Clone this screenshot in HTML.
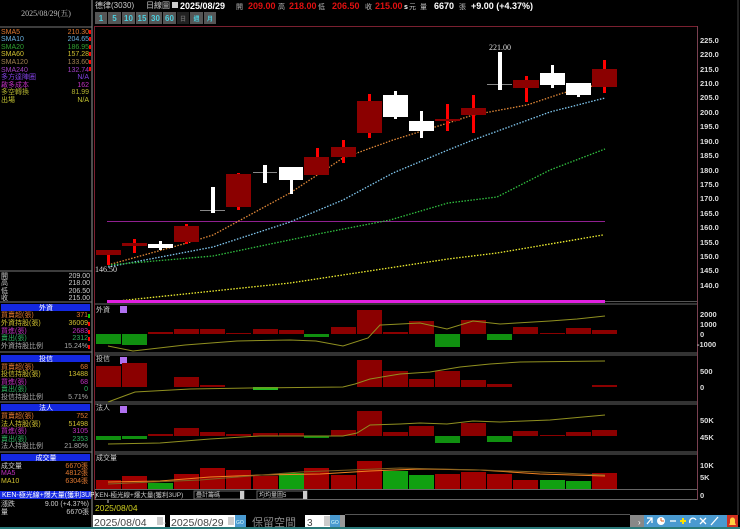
<!DOCTYPE html>
<html><head><meta charset="utf-8"><style>
html,body{margin:0;padding:0;background:#000;width:740px;height:529px;overflow:hidden}
svg{display:block}
text{font-family:"Liberation Sans","Noto Sans CJK TC",sans-serif}
.s{font-family:"Liberation Serif","Noto Serif CJK SC",serif}
</style></head><body>
<svg width="740" height="529" viewBox="0 0 740 529" xmlns="http://www.w3.org/2000/svg">
<rect width="740" height="529" fill="#000"/>
<!-- left panel -->
<line x1="92" y1="0" x2="92" y2="529" stroke="#666" stroke-width="1.5"/>
<text x="46" y="16" fill="#bbb" font-size="8" text-anchor="middle" class="s">2025/08/29(五)</text>
<line x1="0" y1="27" x2="92" y2="27" stroke="#777"/>
<g font-size="7" class="s">
<text x="1" y="34" fill="#e07830">SMA5</text><text x="89" y="34" fill="#e07830" text-anchor="end">210.30</text>
<text x="1" y="41" fill="#6ab0e0">SMA10</text><text x="89" y="41" fill="#6ab0e0" text-anchor="end">204.65</text>
<text x="1" y="49" fill="#30a030">SMA20</text><text x="89" y="49" fill="#30a030" text-anchor="end">186.95</text>
<text x="1" y="56" fill="#d0c030">SMA60</text><text x="89" y="56" fill="#d0c030" text-anchor="end">157.28</text>
<text x="1" y="64" fill="#a08050">SMA120</text><text x="89" y="64" fill="#a08050" text-anchor="end">133.60</text>
<text x="1" y="72" fill="#a040c0">SMA240</text><text x="89" y="72" fill="#a040c0" text-anchor="end">132.74</text>
<text x="1" y="79" fill="#8040e0">多方達陣圈</text><text x="89" y="79" fill="#8040e0" text-anchor="end">N/A</text>
<text x="1" y="87" fill="#c030c0">啟多成本</text><text x="89" y="87" fill="#c030c0" text-anchor="end">162</text>
<text x="1" y="94" fill="#b0b030">多空轉換</text><text x="89" y="94" fill="#b0b030" text-anchor="end">81.99</text>
<text x="1" y="102" fill="#c0c030">出場</text><text x="89" y="102" fill="#c0c030" text-anchor="end">N/A</text>
</g>
<g fill="#f00"><rect x="89" y="30" width="2" height="4"/><rect x="89" y="37" width="2" height="4"/><rect x="89" y="45" width="2" height="4"/><rect x="89" y="52" width="2" height="4"/><rect x="89" y="60" width="2" height="4"/><rect x="89" y="67" width="2" height="4"/></g>
<line x1="0" y1="271" x2="92" y2="271" stroke="#777"/>
<g font-size="7" class="s" fill="#ccc">
<text x="1" y="278">開</text><text x="90" y="278" text-anchor="end">209.00</text>
<text x="1" y="285">高</text><text x="90" y="285" text-anchor="end">218.00</text>
<text x="1" y="293">低</text><text x="90" y="293" text-anchor="end">206.50</text>
<text x="1" y="300">收</text><text x="90" y="300" text-anchor="end">215.00</text>
</g>
<line x1="0" y1="302" x2="92" y2="302" stroke="#777"/>
<g font-size="7" class="s">
<rect x="1" y="304" width="89" height="7" fill="#1428e0"/><text x="46" y="310" fill="#fff" text-anchor="middle">外資</text>
<text x="1" y="317" fill="#e07830">買賣超(張)</text><text x="88" y="317" fill="#e07830" text-anchor="end">371</text>
<text x="1" y="325" fill="#d0c030">外資持股(張)</text><text x="88" y="325" fill="#d0c030" text-anchor="end">36009</text>
<text x="1" y="333" fill="#c030c0">買進(張)</text><text x="88" y="333" fill="#c030c0" text-anchor="end">2683</text>
<text x="1" y="340" fill="#30b060">賣出(張)</text><text x="88" y="340" fill="#30b060" text-anchor="end">2312</text>
<text x="1" y="348" fill="#aaa">外資持股比例</text><text x="88" y="348" fill="#aaa" text-anchor="end">15.24%</text>
<line x1="0" y1="352" x2="92" y2="352" stroke="#777"/>
<rect x="1" y="355" width="89" height="7" fill="#1428e0"/><text x="46" y="361" fill="#fff" text-anchor="middle">投信</text>
<text x="1" y="369" fill="#e07830">買賣超(張)</text><text x="88" y="369" fill="#e07830" text-anchor="end">68</text>
<text x="1" y="376" fill="#d0c030">投信持股(張)</text><text x="88" y="376" fill="#d0c030" text-anchor="end">13488</text>
<text x="1" y="384" fill="#c030c0">買進(張)</text><text x="88" y="384" fill="#c030c0" text-anchor="end">68</text>
<text x="1" y="391" fill="#30b060">賣出(張)</text><text x="88" y="391" fill="#30b060" text-anchor="end">0</text>
<text x="1" y="399" fill="#aaa">投信持股比例</text><text x="88" y="399" fill="#aaa" text-anchor="end">5.71%</text>
<line x1="0" y1="402" x2="92" y2="402" stroke="#777"/>
<rect x="1" y="404" width="89" height="7" fill="#1428e0"/><text x="46" y="410" fill="#fff" text-anchor="middle">法人</text>
<text x="1" y="418" fill="#e07830">買賣超(張)</text><text x="88" y="418" fill="#e07830" text-anchor="end">752</text>
<text x="1" y="426" fill="#d0c030">法人持股(張)</text><text x="88" y="426" fill="#d0c030" text-anchor="end">51498</text>
<text x="1" y="433" fill="#c030c0">買進(張)</text><text x="88" y="433" fill="#c030c0" text-anchor="end">3105</text>
<text x="1" y="441" fill="#30b060">賣出(張)</text><text x="88" y="441" fill="#30b060" text-anchor="end">2353</text>
<text x="1" y="448" fill="#aaa">法人持股比例</text><text x="88" y="448" fill="#aaa" text-anchor="end">21.80%</text>
<line x1="0" y1="452" x2="92" y2="452" stroke="#777"/>
<rect x="1" y="454" width="89" height="7" fill="#1428e0"/><text x="46" y="460" fill="#fff" text-anchor="middle">成交量</text>
<text x="1" y="468" fill="#ccc">成交量</text><text x="88" y="468" fill="#e07830" text-anchor="end">6670張</text>
<text x="1" y="475" fill="#c030c0">MA5</text><text x="88" y="475" fill="#e07830" text-anchor="end">4812張</text>
<text x="1" y="483" fill="#d0c030">MA10</text><text x="88" y="483" fill="#e07830" text-anchor="end">6304張</text>
<rect x="0" y="491" width="91" height="8" fill="#1428e0"/><text x="2" y="497" fill="#fff">KEN-極光線+爆大量(獲利3UP)</text>
<text x="1" y="506" fill="#ccc">漲跌</text><text x="89" y="506" fill="#ccc" text-anchor="end">9.00 (+4.37%)</text>
<text x="1" y="514" fill="#ccc">量</text><text x="89" y="514" fill="#ccc" text-anchor="end">6670張</text>
</g>
<g fill="#f00"><rect x="88" y="314" width="2" height="4" fill="#0c0"/><rect x="88" y="322" width="2" height="4"/><rect x="88" y="330" width="2" height="4"/><rect x="88" y="337" width="2" height="4"/><rect x="88" y="345" width="2" height="4"/></g>

<!-- top header -->
<g font-size="8" class="s" fill="#ccc"><text x="95" y="8">德律(3030)</text><text x="146" y="8">日線圖</text></g>
<rect x="172" y="2" width="6" height="6" fill="#ccc"/>
<g font-size="9" font-weight="bold"><text x="180" y="9" fill="#fff">2025/08/29</text>
<text x="236" y="9" fill="#bbb" font-size="7" font-weight="normal">開</text><text x="248" y="9" fill="#e01010">209.00</text>
<text x="278" y="9" fill="#bbb" font-size="7" font-weight="normal">高</text><text x="289" y="9" fill="#e01010">218.00</text>
<text x="318" y="9" fill="#bbb" font-size="7" font-weight="normal">低</text><text x="332" y="9" fill="#e01010">206.50</text>
<text x="365" y="9" fill="#bbb" font-size="7" font-weight="normal">收</text><text x="375" y="9" fill="#e01010">215.00</text>
<text x="404" y="9" fill="#fff" font-size="7">s</text><text x="409" y="9" fill="#bbb" font-size="7" font-weight="normal">元</text>
<text x="420" y="9" fill="#bbb" font-size="7" font-weight="normal">量</text><text x="434" y="9" fill="#fff">6670</text>
<text x="459" y="9" fill="#bbb" font-size="7" font-weight="normal">張</text><text x="471" y="9" fill="#fff">+9.00 (+4.37%)</text></g>
<!-- buttons -->
<g font-size="8" font-weight="bold" fill="#4cd0e0" text-anchor="middle">
<rect x="95" y="12" width="12" height="12" fill="#555"/><text x="101" y="21">1</text>
<rect x="108" y="12" width="13" height="12" fill="#555"/><text x="114.5" y="21">5</text>
<rect x="122" y="12" width="13" height="12" fill="#555"/><text x="128.5" y="21">10</text>
<rect x="136" y="12" width="12" height="12" fill="#555"/><text x="142" y="21">15</text>
<rect x="149" y="12" width="13" height="12" fill="#555"/><text x="155.5" y="21">30</text>
<rect x="163" y="12" width="13" height="12" fill="#555"/><text x="169.5" y="21">60</text>
<rect x="177" y="12" width="12" height="12" fill="#222"/><text x="183" y="21" fill="#666" font-size="6">日</text>
<rect x="190" y="12" width="13" height="12" fill="#555"/><text x="196.5" y="21" font-size="6">週</text>
<rect x="204" y="12" width="12" height="12" fill="#555"/><text x="210" y="21" font-size="6">月</text>
</g>
<!-- main chart frame -->
<line x1="94.5" y1="26" x2="94.5" y2="500" stroke="#7a2030"/>
<line x1="94" y1="26.5" x2="697" y2="26.5" stroke="#7a2030"/>
<line x1="697.5" y1="26" x2="697.5" y2="500" stroke="#7a4050"/>
<line x1="738" y1="0" x2="738" y2="515" stroke="#444"/>
<g font-size="7.5" font-weight="bold" fill="#ddd">
<text x="700" y="43">225.0</text><text x="700" y="57">220.0</text><text x="700" y="72">215.0</text><text x="700" y="86">210.0</text><text x="700" y="100">205.0</text><text x="700" y="115">200.0</text><text x="700" y="129">195.0</text><text x="700" y="144">190.0</text><text x="700" y="158">185.0</text><text x="700" y="173">180.0</text><text x="700" y="187">175.0</text><text x="700" y="201">170.0</text><text x="700" y="216">165.0</text><text x="700" y="230">160.0</text><text x="700" y="245">155.0</text><text x="700" y="259">150.0</text><text x="700" y="273">145.0</text><text x="700" y="288">140.0</text>
</g>
<line x1="107" y1="221.5" x2="605" y2="221.5" stroke="#902090"/>
<!-- MAs -->
<g fill="none" stroke-width="1.3" stroke-dasharray="1.5 1.5">
<polyline stroke="#e08838" points="108,265 187,243 213,235 290,193 343,158 393,140 448,123 473,115 527,105 563,93 605,83"/>
<polyline stroke="#80c8f0" points="108,267 213,247 290,222 343,200 393,173 448,150 473,140 550,112 605,98"/>
<polyline stroke="#30c040" points="108,265 213,256 323,233 390,220 448,203 497,197 550,170 605,149"/>
<polyline stroke="#f0f030" points="108,302 290,283 448,259 497,253 603,235"/>
</g>
<rect x="107" y="300" width="498" height="3" fill="#e020e0"/>
<line x1="605" y1="301.5" x2="697" y2="301.5" stroke="#555"/>
<!-- candles -->
<g>
<rect x="107" y="250" width="3" height="15" fill="#f00"/><rect x="96" y="250" width="25" height="5" fill="#8b0000"/>
<rect x="133" y="239" width="3" height="14" fill="#f00"/><rect x="122" y="243" width="25" height="3" fill="#8b0000"/>
<rect x="159" y="241" width="3" height="9" fill="#fff"/><rect x="148" y="244" width="25" height="4" fill="#fff"/>
<rect x="185" y="224" width="3" height="20" fill="#f00"/><rect x="174" y="226" width="25" height="16" fill="#8b0000"/>
<line x1="200" y1="210.5" x2="225" y2="210.5" stroke="#888"/><rect x="211" y="187" width="4" height="26" fill="#fff"/>
<rect x="237" y="173" width="3" height="37" fill="#f00"/><rect x="226" y="174" width="25" height="33" fill="#8b0000"/>
<line x1="253" y1="172.5" x2="277" y2="172.5" stroke="#888"/><rect x="263" y="165" width="4" height="18" fill="#fff"/>
<rect x="290" y="167" width="3" height="27" fill="#fff"/><rect x="279" y="167" width="24" height="13" fill="#fff"/>
<rect x="316" y="148" width="3" height="27" fill="#f00"/><rect x="304" y="157" width="25" height="18" fill="#8b0000"/>
<rect x="342" y="140" width="3" height="23" fill="#f00"/><rect x="331" y="147" width="25" height="10" fill="#8b0000"/>
<rect x="368" y="94" width="3" height="44" fill="#f00"/><rect x="357" y="101" width="25" height="32" fill="#8b0000"/>
<rect x="394" y="91" width="3" height="28" fill="#fff"/><rect x="383" y="95" width="25" height="22" fill="#fff"/>
<rect x="420" y="111" width="3" height="27" fill="#fff"/><rect x="409" y="121" width="25" height="10" fill="#fff"/>
<rect x="446" y="104" width="3" height="27" fill="#f00"/><rect x="435" y="119" width="25" height="2" fill="#8b0000"/>
<rect x="472" y="95" width="3" height="38" fill="#f00"/><rect x="461" y="108" width="25" height="7" fill="#8b0000"/>
<line x1="487" y1="84.5" x2="512" y2="84.5" stroke="#888"/><rect x="498" y="52" width="4" height="38" fill="#fff"/>
<rect x="525" y="76" width="3" height="26" fill="#f00"/><rect x="513" y="80" width="26" height="8" fill="#8b0000"/>
<rect x="551" y="65" width="3" height="23" fill="#fff"/><rect x="540" y="73" width="25" height="12" fill="#fff"/>
<rect x="577" y="83" width="3" height="14" fill="#fff"/><rect x="566" y="83" width="25" height="12" fill="#fff"/>
<rect x="603" y="60" width="3" height="33" fill="#f00"/><rect x="592" y="69" width="25" height="18" fill="#8b0000"/>
</g>
<text x="500" y="50" fill="#ddd" font-size="8" text-anchor="middle" class="s">221.00</text>
<text x="95" y="272" fill="#ddd" font-size="8" class="s">146.50</text>
<!-- subpanel separators -->
<g stroke="#666"><line x1="95" y1="304" x2="697" y2="304"/><line x1="95" y1="353" x2="697" y2="353"/><line x1="95" y1="355" x2="697" y2="355"/><line x1="95" y1="402" x2="697" y2="402"/><line x1="95" y1="404" x2="697" y2="404"/><line x1="95" y1="452" x2="697" y2="452"/><line x1="95" y1="454" x2="697" y2="454"/><line x1="95" y1="489.5" x2="697" y2="489.5"/><line x1="95" y1="499.5" x2="697" y2="499.5"/></g>
<g font-size="7" fill="#ccc" class="s"><text x="96" y="312">外資</text><text x="96" y="361">投信</text><text x="96" y="410">法人</text><text x="96" y="460">成交量</text></g>
<g fill="#b070f0"><rect x="120" y="306" width="7" height="7"/><rect x="120" y="357" width="7" height="7"/><rect x="120" y="406" width="7" height="7"/></g>
<!-- panel1 bars -->
<g fill="#8b0000">
<rect x="148" y="332" width="25" height="2"/><rect x="174" y="329" width="25" height="5"/><rect x="200" y="329" width="25" height="5"/><rect x="226" y="333" width="25" height="1"/><rect x="253" y="329" width="25" height="5"/><rect x="279" y="330" width="25" height="4"/><rect x="331" y="327" width="25" height="7"/><rect x="357" y="310" width="25" height="24"/><rect x="383" y="332" width="25" height="2"/><rect x="409" y="321" width="25" height="13"/><rect x="461" y="320" width="25" height="14"/><rect x="513" y="327" width="25" height="7"/><rect x="540" y="333" width="25" height="1"/><rect x="566" y="328" width="25" height="6"/><rect x="592" y="330" width="25" height="4"/>
</g>
<g fill="#109010"><rect x="96" y="334" width="25" height="10"/><rect x="122" y="334" width="25" height="11"/><rect x="304" y="334" width="25" height="3"/><rect x="435" y="334" width="25" height="13"/><rect x="487" y="334" width="25" height="6"/></g>
<polyline fill="none" stroke="#909020" points="108,346 133,351 185,345 237,341 290,340 316,341 343,346 368,338 380,325 420,323 447,329 473,321 500,324 550,321 577,319 605,316"/>
<g font-size="7.5" font-weight="bold" fill="#ddd"><text x="700" y="317">2000</text><text x="700" y="327">1000</text><text x="700" y="337">0</text><text x="697" y="347">-1000</text></g>
<!-- panel2 -->
<g fill="#8b0000">
<rect x="96" y="366" width="25" height="21"/><rect x="122" y="363" width="25" height="24"/><rect x="174" y="377" width="25" height="10"/><rect x="200" y="385" width="25" height="2"/><rect x="357" y="360" width="25" height="27"/><rect x="383" y="371" width="25" height="16"/><rect x="409" y="379" width="25" height="8"/><rect x="435" y="371" width="25" height="16"/><rect x="461" y="380" width="25" height="7"/><rect x="487" y="384" width="25" height="3"/><rect x="592" y="385" width="25" height="2"/>
</g>
<rect x="253" y="387" width="25" height="3" fill="#20c020"/>
<polyline fill="none" stroke="#909020" points="108,402 135,392 190,389 250,388 343,387 355,384 370,379 400,374 430,372 460,367 490,364 520,362 605,361"/>
<g font-size="7.5" font-weight="bold" fill="#ddd"><text x="700" y="374">500</text><text x="700" y="390">0</text></g>
<!-- panel3 -->
<g fill="#8b0000">
<rect x="148" y="434" width="25" height="2"/><rect x="174" y="428" width="25" height="8"/><rect x="200" y="432" width="25" height="4"/><rect x="226" y="434" width="25" height="2"/><rect x="253" y="433" width="25" height="3"/><rect x="279" y="433" width="25" height="3"/><rect x="331" y="430" width="25" height="6"/><rect x="357" y="411" width="25" height="25"/><rect x="383" y="432" width="25" height="4"/><rect x="409" y="426" width="25" height="10"/><rect x="461" y="423" width="25" height="13"/><rect x="513" y="431" width="25" height="5"/><rect x="540" y="435" width="25" height="1"/><rect x="566" y="432" width="25" height="4"/><rect x="592" y="430" width="25" height="6"/>
</g>
<g fill="#109010"><rect x="96" y="436" width="25" height="4"/><rect x="122" y="436" width="25" height="3"/><rect x="304" y="436" width="25" height="2"/><rect x="435" y="436" width="25" height="7"/><rect x="487" y="436" width="25" height="6"/></g>
<polyline fill="none" stroke="#909020" points="108,444 160,443 210,439 260,436 343,436 357,433 370,425 400,424 420,423 447,424 473,421 500,422 550,420 605,415"/>
<g font-size="7.5" font-weight="bold" fill="#ddd"><text x="700" y="423">50K</text><text x="700" y="440">45K</text></g>
<!-- volume -->
<g fill="#a00000">
<rect x="96" y="480" width="25" height="9"/><rect x="122" y="476" width="25" height="13"/><rect x="174" y="474" width="25" height="15"/><rect x="200" y="468" width="25" height="21"/><rect x="226" y="470" width="25" height="19"/><rect x="253" y="476" width="25" height="13"/><rect x="304" y="468" width="25" height="21"/><rect x="331" y="475" width="25" height="14"/><rect x="357" y="461" width="25" height="28"/><rect x="435" y="474" width="25" height="15"/><rect x="461" y="472" width="25" height="17"/><rect x="487" y="474" width="25" height="15"/><rect x="513" y="480" width="25" height="9"/><rect x="592" y="473" width="25" height="16"/>
</g>
<g fill="#10a010"><rect x="148" y="483" width="25" height="6"/><rect x="279" y="473" width="25" height="16"/><rect x="383" y="471" width="25" height="18"/><rect x="409" y="475" width="25" height="14"/><rect x="540" y="480" width="25" height="9"/><rect x="566" y="481" width="25" height="8"/></g>
<polyline fill="none" stroke="#f08020" points="108,482 160,481 210,477 260,475 320,474 370,471 420,469 480,470 540,474 605,476"/>
<polyline fill="none" stroke="#806020" points="108,484 200,480 300,472 400,468 480,470 540,472 605,475"/>
<g font-size="7.5" font-weight="bold" fill="#ddd"><text x="700" y="468">10K</text><text x="700" y="480">5K</text><text x="700" y="498">0</text></g>
<!-- dropdown row -->
<g font-size="6.5" class="s" fill="#ccc"><text x="95" y="497">KEN-極光線+爆大量(獲利3UP)</text></g>
<rect x="194" y="491" width="50" height="8" fill="#000" stroke="#666"/><text x="196" y="497" font-size="6" fill="#ccc">疊計籌碼</text><rect x="240" y="491" width="4" height="8" fill="#ccc"/>
<rect x="257" y="491" width="50" height="8" fill="#000" stroke="#666"/><text x="259" y="497" font-size="6" fill="#ccc">均均量圖5</text><rect x="303" y="491" width="4" height="8" fill="#ccc"/>
<text x="95" y="511" fill="#d0d020" font-size="8.5">2025/08/04</text>
<line x1="108" y1="500" x2="108" y2="503" stroke="#ccc"/>
<!-- bottom controls -->
<rect x="93" y="515" width="72" height="12" fill="#fff"/><text x="94" y="526" font-size="10.5" fill="#444">2025/08/04</text><rect x="157" y="517" width="6" height="8" fill="#ccc"/>
<text x="161" y="526" font-size="9" fill="#ccc">~</text>
<rect x="170" y="515" width="65" height="12" fill="#fff"/><text x="171" y="526" font-size="10.5" fill="#444">2025/08/29</text><rect x="228" y="517" width="6" height="8" fill="#ccc"/>
<rect x="235" y="515" width="11" height="12" fill="#4a9ad0"/><text x="236" y="524" font-size="5" fill="#dff">GO</text>
<text x="252" y="526" font-size="11" fill="#888">保留空間</text>
<rect x="305" y="515" width="25" height="12" fill="#fff"/><text x="307" y="526" font-size="10" fill="#444">3</text><rect x="324" y="516" width="6" height="10" fill="#ccc"/>
<rect x="330" y="515" width="10" height="12" fill="#4a9ad0"/><text x="331" y="524" font-size="5" fill="#dff">GO</text>
<rect x="340" y="515" width="5" height="12" fill="#999"/>
<line x1="345" y1="514.5" x2="630" y2="514.5" stroke="#555"/>
<rect x="630" y="515" width="14" height="12" fill="#888"/><text x="638" y="525" font-size="8" fill="#fff">›</text>
<rect x="644" y="515" width="83" height="12" fill="#4a9ad0"/>
<g stroke="#fff" stroke-width="1.3" fill="none"><path d="M647 524 L652 518 M647 518 H652 V523"/><path d="M670 521 H676"/><path d="M680 521 H686 M683 518 V524" stroke="#ffe000" stroke-width="2"/><path d="M690 523 A3 3 0 1 1 696 520"/><path d="M700 518 l6 6 M706 518 l-6 6"/><path d="M711 525 L718 517"/></g>
<circle cx="661" cy="521" r="4" fill="#fff"/><path d="M661 521 V518 M661 521 H664" stroke="#e06020"/>
<rect x="727" y="515" width="11" height="12" fill="#d03020"/><path d="M729 525 h7 l-1 -2 v-3 a2.5 2.5 0 0 0 -5 0 v3 z" fill="#ffd040"/>
<rect x="0" y="527" width="740" height="2" fill="#2a7a7a"/>
</svg>
</body></html>
